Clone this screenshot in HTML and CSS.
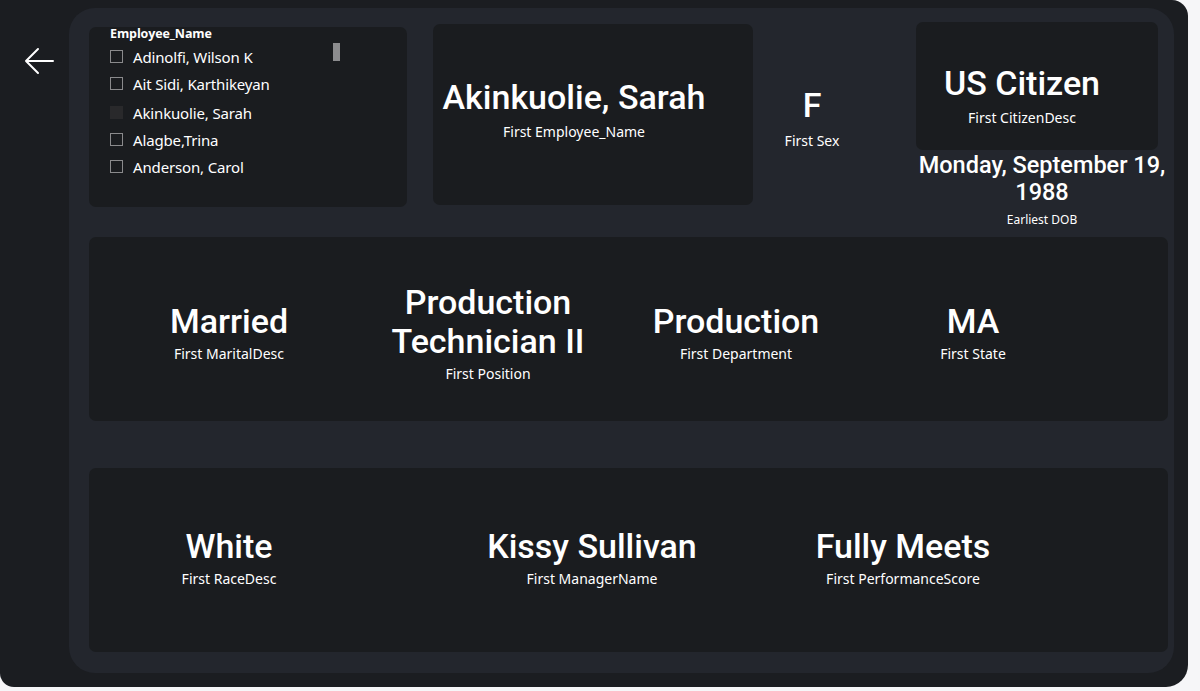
FILE: index.html
```html
<!DOCTYPE html>
<html>
<head>
<meta charset="utf-8">
<link rel="stylesheet" href="styles.css">
</head>
<body>
<div class="frame">
  <div class="rail">
    <svg class="back" width="32" height="30" viewBox="0 0 32 30"><path d="M30 15H3M15 3L3 15l12 12" fill="none" stroke="#ffffff" stroke-width="2" stroke-linecap="round" stroke-linejoin="round"/></svg>
  </div>
  <div class="panel">
    <div class="row-top">
      <div class="card slicer">
        <div class="slicer-title">Employee_Name</div>
        <div class="slicer-list">
          <div class="item"><span class="box"></span>Adinolfi, Wilson K</div>
          <div class="item"><span class="box"></span>Ait Sidi, Karthikeyan</div>
          <div class="item"><span class="box sel"></span>Akinkuolie, Sarah</div>
          <div class="item"><span class="box"></span>Alagbe,Trina</div>
          <div class="item"><span class="box"></span>Anderson, Carol</div>
        </div>
        <div class="scroll"></div>
      </div>
      <div class="card namecard">
        <div class="val">Akinkuolie, Sarah</div>
        <div class="lbl">First Employee_Name</div>
      </div>
      <div class="sexcol">
        <div class="val">F</div>
        <div class="lbl">First Sex</div>
      </div>
      <div class="citcol">
        <div class="card citcard">
          <div class="val">US Citizen</div>
          <div class="lbl">First CitizenDesc</div>
        </div>
        <div class="dob">Monday, September 19,<br>1988</div>
        <div class="lbl small">Earliest DOB</div>
      </div>
    </div>
    <div class="card row-mid">
      <div class="kpi"><div class="val big">Married</div><div class="lbl">First MaritalDesc</div></div>
      <div class="kpi"><div class="val big">Production<br>Technician II</div><div class="lbl">First Position</div></div>
      <div class="kpi"><div class="val big">Production</div><div class="lbl">First Department</div></div>
      <div class="kpi"><div class="val big">MA</div><div class="lbl">First State</div></div>
    </div>
    <div class="card row-bot">
      <div class="kpi"><div class="val big">White</div><div class="lbl">First RaceDesc</div></div>
      <div class="kpi"><div class="val big">Kissy Sullivan</div><div class="lbl">First ManagerName</div></div>
      <div class="kpi"><div class="val big">Fully Meets</div><div class="lbl">First PerformanceScore</div></div>
    </div>
  </div>
</div>
</body>
</html>
```
FILE: styles.css
```css
html, body {
  margin: 0;
  padding: 0;
  background: #f6f6f8;
}
body {
  width: 1200px;
  height: 691px;
  overflow: hidden;
  font-family: "Noto Sans", "Open Sans", sans-serif;
  color: #ffffff;
}
.frame {
  width: 1188px;
  height: 687px;
  background: #1b1d21;
  border-radius: 0 16px 22px 14px;
  display: flex;
  box-sizing: border-box;
  padding: 8px 14px 14px 0;
}
.rail {
  width: 69px;
  flex: none;
}
.back {
  display: block;
  margin: 38px 0 0 23px;
}
.panel {
  flex: 1;
  background: #23262d;
  border-radius: 26px;
  padding: 15px 6px 21px 20px;
  display: flex;
  flex-direction: column;
}
.card {
  background: #1a1c1f;
  border-radius: 7px;
}
.row-top {
  display: flex;
  align-items: flex-start;
  height: 212px;
}
.slicer {
  position: relative;
  width: 318px;
  height: 180px;
  margin-top: 4px;
  box-sizing: border-box;
  padding: 0 0 0 21px;
}
.slicer-title {
  font-family: "Open Sans", sans-serif;
  font-weight: 700;
  font-size: 12.5px;
  line-height: 14px;
  letter-spacing: -0.1px;
}
.slicer-list {
  margin-top: 2px;
}
.item {
  display: flex;
  align-items: center;
  height: 27px;
  font-size: 15px;
  letter-spacing: -0.15px;
}
.item:nth-child(3) {
  margin-top: 2px;
}
.box {
  width: 13px;
  height: 13px;
  box-sizing: border-box;
  border: 1px solid #8a8a8c;
  margin-right: 10px;
  flex: none;
}
.box.sel {
  border: none;
  background: #29292b;
}
.scroll {
  position: absolute;
  left: 244px;
  top: 16px;
  width: 7px;
  height: 18px;
  background: #8c8c8e;
}
.val {
  font-family: "Roboto", sans-serif;
  font-weight: 500;
  font-size: 34px;
  line-height: 40px;
  white-space: nowrap;
  text-align: center;
}
.lbl {
  font-size: 14px;
  line-height: 18px;
  white-space: nowrap;
  text-align: center;
}
.lbl.small {
  font-size: 12px;
  line-height: 15px;
  margin-top: 6px;
}
.namecard {
  width: 320px;
  height: 181px;
  margin-left: 26px;
  margin-top: 1px;
  box-sizing: border-box;
  padding: 53px 38px 0 0;
  display: flex;
  flex-direction: column;
  align-items: center;
}
.namecard .lbl { margin-top: 6px; }
.sexcol {
  width: 118px;
  padding-top: 62px;
  display: flex;
  flex-direction: column;
  align-items: center;
}
.sexcol .lbl { margin-top: 7px; }
.citcol {
  width: 252px;
  margin-left: 45px;
  display: flex;
  flex-direction: column;
  align-items: center;
}
.citcard {
  align-self: flex-start;
  width: 242px;
  height: 128px;
  margin-top: -1px;
  box-sizing: border-box;
  padding: 41px 30px 0 0;
  display: flex;
  flex-direction: column;
  align-items: center;
}
.citcard .lbl { margin-top: 6px; }
.dob {
  font-family: "Roboto", sans-serif;
  font-weight: 500;
  font-size: 23.5px;
  line-height: 27px;
  text-align: center;
  white-space: nowrap;
  margin-top: 2px;
}
.row-mid {
  height: 184px;
  margin-top: 3px;
  display: grid;
  grid-template-columns: 280px 238px 258px 216px 1fr;
  align-items: center;
  padding-top: 8px;
  box-sizing: border-box;
}
.row-bot {
  height: 185px;
  margin-top: 47px;
  display: grid;
  grid-template-columns: 280px 446px 176px 1fr;
  align-items: center;
  padding-bottom: 4px;
  box-sizing: border-box;
}
.kpi {
  display: flex;
  flex-direction: column;
  align-items: center;
}
.val.big {
  font-size: 34px;
  line-height: 39px;
}
.kpi .lbl { margin-top: 4px; }
```
